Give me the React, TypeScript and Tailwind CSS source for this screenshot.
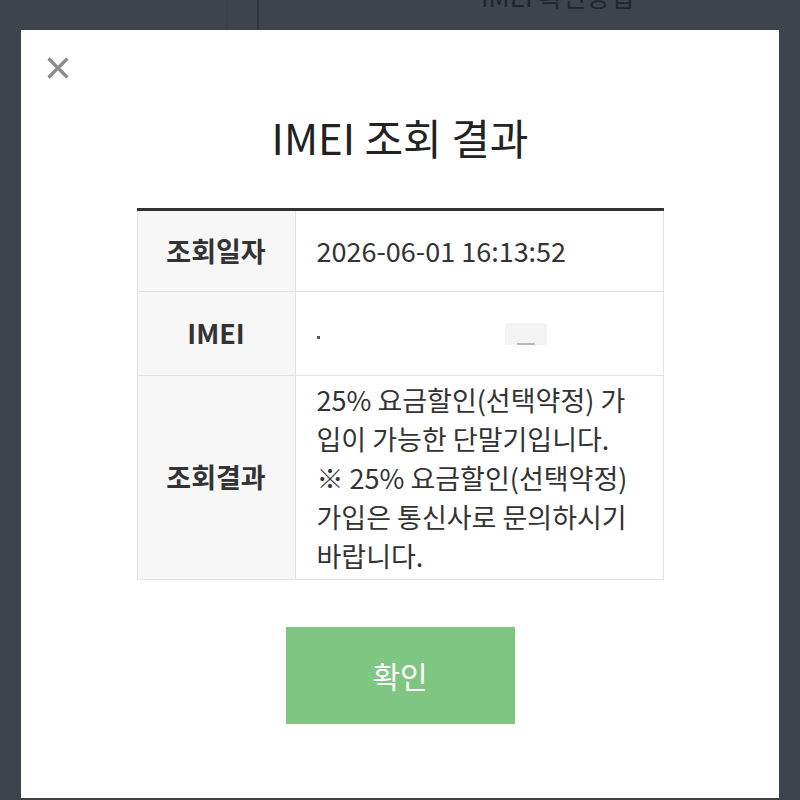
export default function App() {
  const font = "font-['Noto_Sans_CJK_KR','Noto_Sans',sans-serif]";

  return (
    <div className={`relative w-[800px] h-[800px] overflow-hidden bg-[#3f434b] ${font}`}>
      {/* dimmed page behind the modal */}
      <div className="flex h-[30px]">
        <div className="w-[227px] border-r border-[#3b3e45]" />
        <div className="w-[32px] border-r-2 border-[#33363c]" />
        <div className="flex-1 flex justify-center">
          <div className="-mt-[17px] ml-[56px] text-[26px] leading-none text-[#22252a]">
            IMEI 확인방법
          </div>
        </div>
      </div>

      <div className="mx-[21px] h-[768px] bg-white flex flex-col items-center">
        <button className="self-start ml-[26px] mt-[27px] w-[22px] h-[22px]">
          <svg viewBox="0 0 22 22" className="w-[22px] h-[22px]">
            <path d="M1.5 1.5 L20.5 20.5 M20.5 1.5 L1.5 20.5" stroke="#8c8c8c" strokeWidth="3.2" />
          </svg>
        </button>

        <h1 className="mt-[36px] text-[42px] leading-[44px] text-[#222] font-normal">
          IMEI 조회 결과
        </h1>

        <table className="mt-[49px] w-[527px] border-collapse border-t-[3px] border-t-[#333] text-[#333]">
          <tbody>
            <tr className="h-[82px]">
              <th className="w-[158px] bg-[#f7f7f7] border border-[#e3e3e3] text-[27px] font-bold">
                조회일자
              </th>
              <td className="border border-[#e3e3e3] pl-[21px] text-[27px]">
                2026-06-01 16:13:52
              </td>
            </tr>
            <tr className="h-[84px]">
              <th className="bg-[#f7f7f7] border border-[#e3e3e3] text-[27px] font-bold">IMEI</th>
              <td className="border border-[#e3e3e3] pl-[21px]">
                <div className="flex items-center h-[30px]">
                  <div className="w-[3px] h-[3px] mt-[8px] bg-[#555]" />
                  <div className="ml-[185px] w-[42px] h-[22px] bg-[#f3f3f3] rounded-[3px] flex items-end justify-center">
                    <div className="w-[18px] h-[2px] bg-[#bbb]" />
                  </div>
                </div>
              </td>
            </tr>
            <tr className="h-[204px]">
              <th className="bg-[#f7f7f7] border border-[#e3e3e3] text-[27px] font-bold">
                조회결과
              </th>
              <td className="border border-[#e3e3e3] pl-[21px] py-[3px] text-[27px] leading-[39px]">
                <div>25% 요금할인(선택약정) 가</div>
                <div>입이 가능한 단말기입니다.</div>
                <div>※ 25% 요금할인(선택약정)</div>
                <div>가입은 통신사로 문의하시기</div>
                <div>바랍니다.</div>
              </td>
            </tr>
          </tbody>
        </table>

        <button className="mt-[47px] w-[229px] h-[97px] bg-[#7fc683] text-white text-[30px]">
          확인
        </button>
      </div>
    </div>
  );
}
